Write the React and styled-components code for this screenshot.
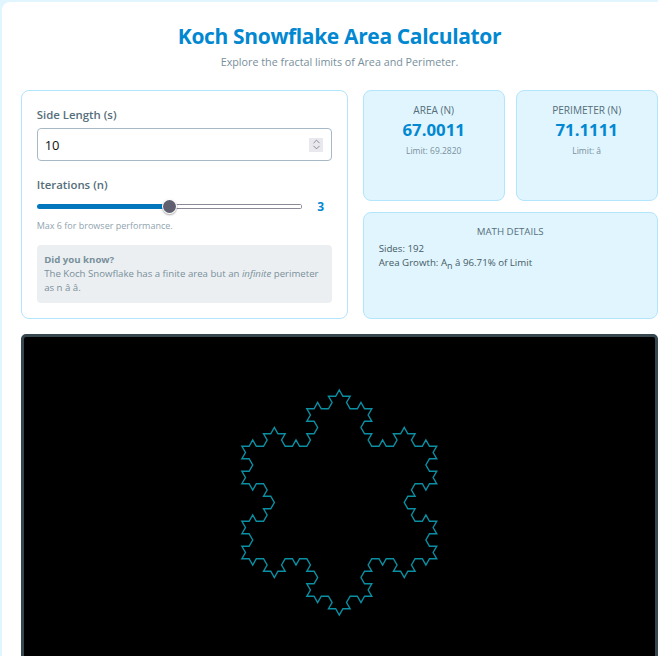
import React, { useState } from 'react';
import styled, { createGlobalStyle } from 'styled-components';
import { ChevronUp, ChevronDown } from 'lucide-react';

const GlobalStyle = createGlobalStyle`
  html, body {
    margin: 0;
    height: 100%;
    overflow: hidden;
    background: #e1f5fe;
    font-family: "Open Sans", "Noto Sans", sans-serif;
  }
`;

const Page = styled.div`
  width: 675px;
  margin: 2px 0 0 2px;
  padding: 20px 19.2px 19px;
  box-sizing: border-box;
  background: #fff;
  border-radius: 8px;
`;

const Header = styled.header`
  text-align: center;
  margin-bottom: 18.5px;
`;

const Title = styled.h1`
  margin: 0;
  font-size: 21px;
  line-height: 29px;
  font-weight: 700;
  letter-spacing: -0.35px;
  color: #0288d1;
`;

const Subtitle = styled.p`
  margin: 2px 0 0;
  font-size: 10.75px;
  line-height: 18px;
  color: #78909c;
`;

const TopGrid = styled.div`
  display: grid;
  grid-template-columns: 326.5px 295px;
  column-gap: 15px;
  margin-bottom: 15px;
`;

const Controls = styled.section`
  box-sizing: border-box;
  height: 229px;
  padding: 15.5px 14.5px 15px;
  border: 1px solid #b3e5fc;
  border-radius: 8px;
`;

const FieldLabel = styled.label`
  display: block;
  font-size: 11.4px;
  line-height: 18px;
  font-weight: 600;
  color: #546e7a;
  margin-bottom: 3.5px;
`;

const InputWrap = styled.div`
  position: relative;
`;

const NumberInput = styled.input`
  display: block;
  box-sizing: border-box;
  width: 100%;
  height: 33px;
  padding: 1px 7px 0;
  border: 1px solid #a7b8c6;
  border-radius: 4px;
  font-family: inherit;
  font-size: 13px;
  color: #111;
  outline: none;
  appearance: textfield;

  &::-webkit-inner-spin-button {
    appearance: none;
  }
`;

const Spinner = styled.div`
  position: absolute;
  top: 10px;
  right: 9px;
  width: 14px;
  height: 14px;
  display: flex;
  flex-direction: column;
  align-items: center;
  justify-content: center;
  background: #e8e8ee;
  color: #77777f;

  svg {
    flex: none;
    margin: -2.25px 0;
  }
`;

const IterationLabel = styled(FieldLabel)`
  margin-top: 15px;
  margin-bottom: 4.5px;
`;

const SliderRow = styled.div`
  display: flex;
  align-items: center;
  gap: 15px;
`;

const Slider = styled.input`
  appearance: none;
  flex: 1;
  min-width: 0;
  height: 16px;
  margin: 0;
  background: transparent;

  &::-webkit-slider-runnable-track {
    height: 5px;
    border-radius: 3px;
    background:
      linear-gradient(#0277bd, #0277bd) left / var(--fill) 100% no-repeat,
      linear-gradient(#fff, #fff) center / calc(100% - 2px) 3px no-repeat,
      #8c8a98;
  }

  &::-webkit-slider-thumb {
    appearance: none;
    width: 13px;
    height: 13px;
    margin-top: -4px;
    border-radius: 50%;
    background: #5f5f70;
    box-shadow: 0 0 0 1px #fff, 0 1px 2px 1px rgba(0, 0, 0, 0.35);
  }
`;

const SliderValue = styled.span`
  width: 15px;
  font-size: 12px;
  font-weight: 700;
  color: #0288d1;
`;

const Hint = styled.p`
  margin: 3px 0 0;
  font-size: 9px;
  line-height: 16px;
  color: #90a4ae;
`;

const Note = styled.aside`
  margin-top: 11px;
  padding: 8px 7.5px;
  border-radius: 4px;
  background: #eceff1;
  font-size: 9.65px;
  line-height: 14px;
  color: #78909c;

  strong {
    display: block;
    font-weight: 700;
  }
`;

const Stats = styled.div`
  display: grid;
  grid-template-columns: 1fr 1fr;
  grid-template-rows: 111px 107px;
  gap: 11px;
`;

const StatCard = styled.div`
  box-sizing: border-box;
  padding: 12px 15px;
  border: 1px solid #b3e5fc;
  border-radius: 8px;
  background: #e1f5fe;
  text-align: center;
  grid-column: ${(p) => (p.$wide ? '1 / -1' : 'auto')};
`;

const StatLabel = styled.div`
  font-size: ${(p) => (p.$small ? '9.7px' : '10.1px')};
  line-height: 14px;
  color: #546e7a;
`;

const StatValue = styled.div`
  font-size: 16.8px;
  line-height: 24px;
  font-weight: 700;
  color: #0288d1;
  margin-top: 1px;
`;

const StatLimit = styled.div`
  font-size: 8.5px;
  line-height: 14px;
  color: #78909c;
  margin-top: 2px;
`;

const Details = styled.div`
  margin-top: 3px;
  text-align: left;
  font-size: 9.7px;
  line-height: 14px;
  color: #455a64;

  sub {
    font-size: 9px;
    line-height: 0;
  }
`;

const CanvasFrame = styled.div`
  box-sizing: border-box;
  height: 400px;
  border: 3px solid #37474f;
  border-radius: 5px;
  background: #000;
  overflow: hidden;
`;

const Flake = styled.svg`
  display: block;
  fill: none;
  stroke: #0a8fa3;
  stroke-width: 1.4;
`;

const kochPoints = (cx, cy, radius, depth) => {
  let pts = [0, 1, 2].map((i) => {
    const a = -Math.PI / 2 + (i * 2 * Math.PI) / 3;
    return [cx + radius * Math.cos(a), cy + radius * Math.sin(a)];
  });
  for (let d = 0; d < depth; d++) {
    const next = [];
    pts.forEach((p, i) => {
      const q = pts[(i + 1) % pts.length];
      const dx = (q[0] - p[0]) / 3;
      const dy = (q[1] - p[1]) / 3;
      const c = Math.cos(-Math.PI / 3);
      const s = Math.sin(-Math.PI / 3);
      const a = [p[0] + dx, p[1] + dy];
      next.push(p, a, [a[0] + dx * c - dy * s, a[1] + dx * s + dy * c], [p[0] + 2 * dx, p[1] + 2 * dy]);
    });
    pts = next;
  }
  return pts.map((p) => p.map((v) => v.toFixed(2)).join(',')).join(' ');
};

const App = () => {
  const [side, setSide] = useState(10);
  const [iterations, setIterations] = useState(3);

  return (
    <Page>
      <GlobalStyle />
      <Header>
        <Title>Koch Snowflake Area Calculator</Title>
        <Subtitle>Explore the fractal limits of Area and Perimeter.</Subtitle>
      </Header>
      <TopGrid>
        <Controls>
          <FieldLabel htmlFor="side">Side Length (s)</FieldLabel>
          <InputWrap>
            <NumberInput id="side" type="number" value={side} onChange={(e) => setSide(e.target.value)} />
            <Spinner>
              <ChevronUp size={11} strokeWidth={1.8} />
              <ChevronDown size={11} strokeWidth={1.8} />
            </Spinner>
          </InputWrap>
          <IterationLabel htmlFor="iterations">Iterations (n)</IterationLabel>
          <SliderRow>
            <Slider
              id="iterations"
              type="range"
              min="0"
              max="6"
              value={iterations}
              style={{ '--fill': `${(iterations / 6) * 100}%` }}
              onChange={(e) => setIterations(Number(e.target.value))}
            />
            <SliderValue>{iterations}</SliderValue>
          </SliderRow>
          <Hint>Max 6 for browser performance.</Hint>
          <Note>
            <strong>Did you know?</strong>
            The Koch Snowflake has a finite area but an <em>infinite</em> perimeter as n â â.
          </Note>
        </Controls>
        <Stats>
          <StatCard>
            <StatLabel>AREA (N)</StatLabel>
            <StatValue>67.0011</StatValue>
            <StatLimit>Limit: 69.2820</StatLimit>
          </StatCard>
          <StatCard>
            <StatLabel>PERIMETER (N)</StatLabel>
            <StatValue>71.1111</StatValue>
            <StatLimit>Limit: â</StatLimit>
          </StatCard>
          <StatCard $wide>
            <StatLabel $small>MATH DETAILS</StatLabel>
            <Details>
              Sides: 192
              <br />
              Area Growth: A<sub>n</sub> â 96.71% of Limit
            </Details>
          </StatCard>
        </Stats>
      </TopGrid>
      <CanvasFrame>
        <Flake width="631" height="394" viewBox="0 0 631 394">
          <polygon points={kochPoints(315.3, 165.5, 112.5, iterations)} />
        </Flake>
      </CanvasFrame>
    </Page>
  );
};

export default App;
